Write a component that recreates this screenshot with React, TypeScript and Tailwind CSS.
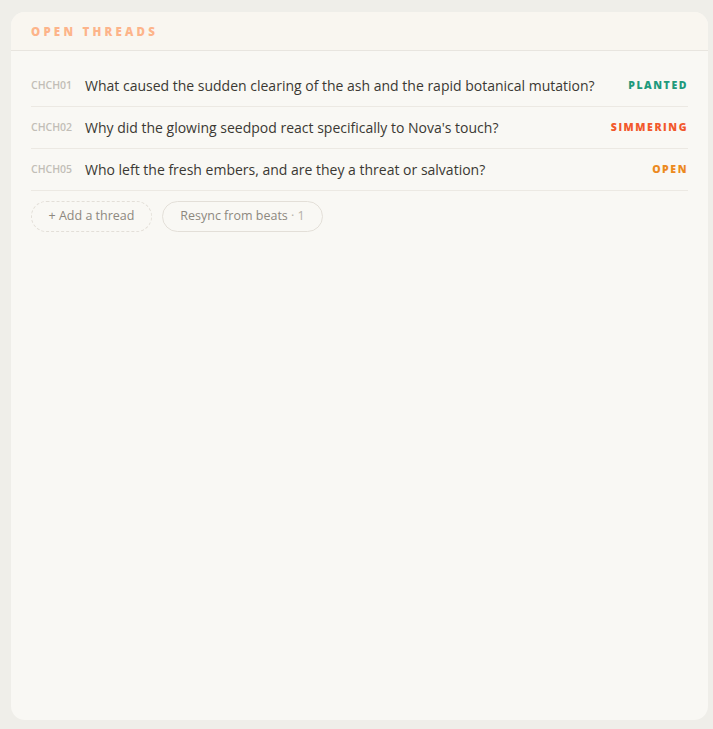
const threads = [
  {
    code: "CHCH01",
    text: "What caused the sudden clearing of the ash and the rapid botanical mutation?",
    status: "PLANTED",
    color: "text-[#1f9a7c]",
  },
  {
    code: "CHCH02",
    text: "Why did the glowing seedpod react specifically to Nova's touch?",
    status: "SIMMERING",
    color: "text-[#f2582c]",
  },
  {
    code: "CHCH05",
    text: "Who left the fresh embers, and are they a threat or salvation?",
    status: "OPEN",
    color: "text-[#ec8a1e]",
  },
];

export default function App() {
  return (
    <div className="min-h-screen bg-[#efeee9] pt-[12px] pl-[11px] font-['Open_Sans',sans-serif]">
      <div className="w-[697px] h-[708px] rounded-[14px] bg-[#f9f8f4] overflow-hidden flex flex-col">
        <div className="h-[39px] bg-[#f9f6f0] border-b border-[#e8e5df] px-[20px] pt-[1px] flex items-center">
          <span className="text-[11.5px] font-extrabold tracking-[0.28em] text-[#fdb48a]">OPEN THREADS</span>
        </div>
        <div className="px-[20px] pt-[14px]">
          {threads.map((t) => (
            <div key={t.code} className="h-[42px] border-b border-[#ece9e3] flex items-center">
              <span className="w-[54px] shrink-0 text-[10.5px] font-semibold text-[#c2beb7]">{t.code}</span>
              <span className="flex-1 text-[14px] text-[#3b3833] whitespace-nowrap">{t.text}</span>
              <span className={`text-[10.5px] font-extrabold tracking-[0.15em] ${t.color}`}>{t.status}</span>
            </div>
          ))}
          <div className="flex gap-[10px] mt-[10px]">
            <button className="h-[31px] w-[121px] rounded-full border border-dashed border-[#e3dfd8] text-[12.5px] text-[#8d887f]">
              + Add a thread
            </button>
            <button className="h-[31px] w-[161px] rounded-full border border-[#e3dfd8] text-[12.5px] text-[#8d887f]">
              Resync from beats <span className="text-[#b5b0a8]">· 1</span>
            </button>
          </div>
        </div>
      </div>
    </div>
  );
}
